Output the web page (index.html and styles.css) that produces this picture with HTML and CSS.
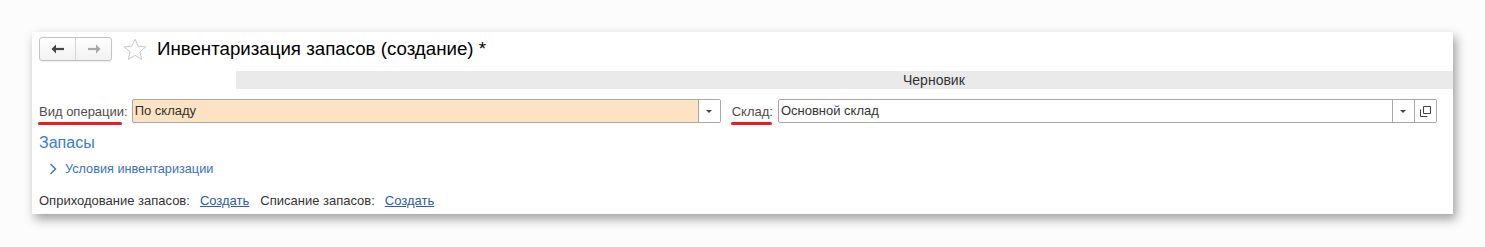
FILE: index.html
```html
<!DOCTYPE html>
<html lang="ru">
<head>
<meta charset="utf-8">
<title>Инвентаризация запасов (создание)</title>
<link rel="stylesheet" href="styles.css">
</head>
<body>
<div class="panel">
  <div class="header">
    <div class="nav">
      <span class="nav-btn">
        <svg width="14" height="10" viewBox="0 0 14 10"><path d="M3 5h10" stroke="#444" stroke-width="2.2"/><path d="M0.5 5l4.5-4.5v9z" fill="#444"/></svg>
      </span>
      <span class="nav-btn">
        <svg width="14" height="10" viewBox="0 0 14 10"><path d="M1 5h10" stroke="#a8a8a8" stroke-width="2.2"/><path d="M13.5 5l-4.5-4.5v9z" fill="#a8a8a8"/></svg>
      </span>
    </div>
    <svg class="star" width="24" height="23" viewBox="0 0 24 23"><path d="M12 1.2l3.1 7 7.6.7-5.8 5 1.8 7.4L12 17.4l-6.7 3.9 1.8-7.4-5.8-5 7.6-.7z" fill="none" stroke="#c8c8c8" stroke-width="1" stroke-linejoin="round"/></svg>
    <h1 class="title">Инвентаризация запасов (создание) *</h1>
  </div>
  <div class="status"><span>Черновик</span></div>
  <div class="fields">
    <label class="label marked mark-long">Вид операции:</label>
    <div class="input peach w-op">
      <span class="value">По складу</span>
      <span class="btn"><span class="tri"></span></span>
    </div>
    <label class="label marked mark-short sklad">Склад:</label>
    <div class="input w-sklad">
      <span class="value">Основной склад</span>
      <span class="btn"><span class="tri"></span></span>
      <span class="btn">
        <svg width="11" height="11" viewBox="0 0 11 11"><path d="M3.5 0.5h7v7h-7z M0.5 3.5v7h7" fill="none" stroke="#444" stroke-width="1"/></svg>
      </span>
    </div>
  </div>
  <div class="group-title">Запасы</div>
  <div class="collapse">
    <svg width="8" height="12" viewBox="0 0 8 12"><path d="M1.5 1l5 5-5 5" fill="none" stroke="#3a6fc4" stroke-width="1.4"/></svg>
    <span>Условия инвентаризации</span>
  </div>
  <div class="footer">
    <span>Оприходование запасов:</span>
    <a href="#" class="link">Создать</a>
    <span>Списание запасов:</span>
    <a href="#" class="link">Создать</a>
  </div>
</div>
</body>
</html>
```

FILE: styles.css
```css
html, body {
  margin: 0;
  padding: 0;
}
body {
  background: #fcfcfc;
  font-family: "Liberation Sans", Arial, sans-serif;
  padding: 32px 0 0 32px;
  height: 247px;
  box-sizing: border-box;
  overflow: hidden;
}
.panel {
  width: 1421px;
  height: 182px;
  background: #fff;
  box-shadow: 3px 5px 10px rgba(0,0,0,0.38);
  box-sizing: border-box;
  padding: 5px 0 0 7px;
  overflow: hidden;
}
.header {
  display: flex;
  align-items: center;
  height: 24px;
}
.nav {
  display: flex;
  width: 73px;
  height: 24px;
  box-sizing: border-box;
  border: 1px solid #c3c3c3;
  border-radius: 3px;
  background: linear-gradient(#ffffff, #f1f1f1);
  box-shadow: 0 1px 1px rgba(0,0,0,0.08);
}
.nav-btn {
  flex: 1;
  display: flex;
  align-items: center;
  justify-content: center;
}
.nav-btn + .nav-btn {
  border-left: 1px solid #d6d6d6;
}
.star {
  margin-left: 11px;
}
.title {
  margin: 0 0 0 10px;
  font-size: 18.7px;
  font-weight: normal;
  color: #000;
}
.status {
  margin: 10px 0 0 197px;
  height: 18px;
  background: #eaeaea;
  font-size: 14px;
  color: #333;
  line-height: 18px;
  padding-left: 667px;
}
.fields {
  display: flex;
  align-items: center;
  margin-top: 10px;
  height: 24px;
}
.label {
  font-size: 13px;
  color: #4d4d4d;
  position: relative;
}
.marked::after {
  content: "";
  position: absolute;
  left: -1px;
  bottom: -6px;
  height: 3px;
  border-radius: 2px;
  background: #ec1c24;
}
.mark-long { margin-right: 4px; }
.mark-long::after { right: 6px; }
.sklad { margin-left: 11px; margin-right: 5px; }
.mark-short::after { right: 1px; }
.input {
  display: flex;
  align-items: stretch;
  height: 24px;
  box-sizing: border-box;
  border: 1px solid #a8a8a8;
  border-radius: 2px;
  background: #fff;
  font-size: 13px;
  color: #333;
}
.peach { background: #fde3c4; }
.w-op { width: 589px; }
.w-sklad { width: 659px; }
.value {
  flex: 1;
  padding-left: 2px;
  line-height: 22px;
}
.btn {
  width: 21px;
  border-left: 1px solid #a8a8a8;
  background: #fff;
  display: flex;
  align-items: center;
  justify-content: center;
}
.tri {
  width: 0;
  height: 0;
  border-left: 3px solid transparent;
  border-right: 3px solid transparent;
  border-top: 3px solid #444;
}
.group-title {
  margin-top: 11px;
  font-size: 16px;
  color: #3a7bd5;
  line-height: 18px;
}
.collapse {
  display: flex;
  align-items: center;
  margin: 9px 0 0 10px;
  font-size: 12.7px;
  color: #3a6fc4;
  height: 16px;
}
.collapse svg { margin-right: 8px; }
.footer {
  display: flex;
  align-items: center;
  margin-top: 16px;
  font-size: 13px;
  color: #333;
}
.footer > * + * { margin-left: 11px; }
.footer > .link { margin-left: 10px; }
.link {
  color: #2a5bb0;
  text-decoration: underline;
}
```
